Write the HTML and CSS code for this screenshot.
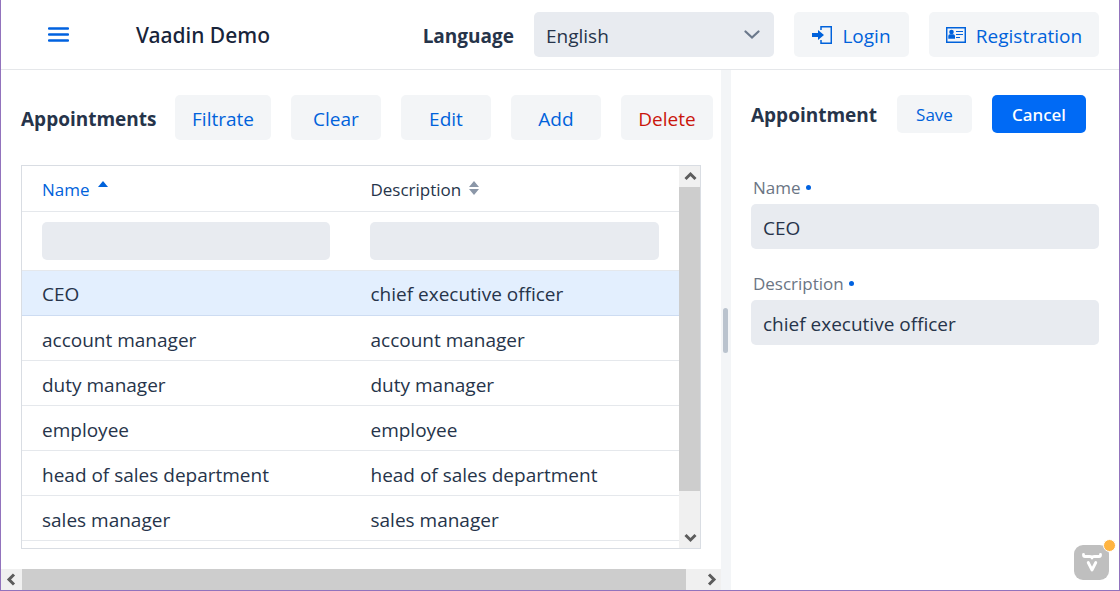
FILE: index.html
```html
<!DOCTYPE html>
<html lang="en">
<head>
<meta charset="utf-8">
<title>Vaadin Demo</title>
<link rel="stylesheet" href="styles.css">
</head>
<body>
<div class="app">
  <header class="navbar">
    <button class="menu-toggle" type="button" aria-label="Menu">
      <svg width="21" height="16" viewBox="0 0 21 16"><path d="M1 1.500h19M1 7.500h19M1 13.500h19" stroke="currentColor" stroke-width="2.400" stroke-linecap="round"/></svg>
    </button>
    <h1 class="app-title">Vaadin Demo</h1>
    <div class="nav-actions">
      <label class="heading" for="language">Language</label>
      <div class="select-wrap">
        <select class="field" id="language"><option>English</option></select>
        <svg class="select-arrow" width="16" height="10" viewBox="0 0 16 10"><path d="M1.500 1.500L8 7.500L14.500 1.500" fill="none" stroke="currentColor" stroke-width="2.200" stroke-linecap="round"/></svg>
      </div>
      <button class="btn btn-login" type="button">
        <svg width="20" height="20" viewBox="0 0 20 20"><path d="M9 4V.7H19.300V17.300H9V14" fill="none" stroke="currentColor" stroke-width="1.500"/><path d="M0 7h6V4l6 5-6 5v-3H0z" fill="currentColor"/></svg>
        Login
      </button>
      <button class="btn btn-registration" type="button">
        <svg width="20" height="20" viewBox="0 0 20 20"><path d="M.7 1.700H19.300V16.300H.7z" fill="none" stroke="currentColor" stroke-width="1.500"/><path d="M10 5.500h7M10 8.500h7M10 11.500h4" stroke="currentColor" stroke-width="1"/><circle cx="5.500" cy="6" r="2.300" fill="currentColor"/><path d="M2.300 12.700V10q0-1.700 1.700-1.700h3.200q1.800 0 1.800 1.700v2.700z" fill="currentColor"/></svg>
        Registration
      </button>
    </div>
  </header>
  <main class="split">
    <section class="master">
      <div class="master-body">
        <div class="toolbar">
          <h2 class="heading list-heading">Appointments</h2>
          <button class="btn btn-filtrate" type="button">Filtrate</button>
          <button class="btn" type="button">Clear</button>
          <button class="btn" type="button">Edit</button>
          <button class="btn" type="button">Add</button>
          <button class="btn btn-danger" type="button">Delete</button>
        </div>
        <div class="grid">
          <div class="grid-view">
            <table class="grid-table">
              <thead>
                <tr class="head-row">
                  <th scope="col"><span class="sorter sorter-active">Name
                    <svg width="10" height="18" viewBox="0 0 10 18"><path d="M5 0l5 6H0z" fill="currentColor"/></svg></span></th>
                  <th scope="col"><span class="sorter">Description
                    <svg class="sort-icon" width="10" height="18" viewBox="0 0 10 18"><path d="M5 0l5 6H0zM5 14l5-6H0z" fill="currentColor"/></svg></span></th>
                </tr>
                <tr class="filter-row">
                  <td><input class="field field-small" type="text" aria-label="Filter by name"></td>
                  <td><input class="field field-small" type="text" aria-label="Filter by description"></td>
                </tr>
              </thead>
              <tbody>
                <tr class="selected"><td>CEO</td><td>chief executive officer</td></tr>
                <tr><td>account manager</td><td>account manager</td></tr>
                <tr><td>duty manager</td><td>duty manager</td></tr>
                <tr><td>employee</td><td>employee</td></tr>
                <tr><td>head of sales department</td><td>head of sales department</td></tr>
                <tr><td>sales manager</td><td>sales manager</td></tr>
              </tbody>
            </table>
          </div>
          <div class="scrollbar scrollbar-vertical">
            <svg width="21" height="21" viewBox="0 0 21 21"><path d="M6.500 13l5-5 5 5" class="chevron"/></svg>
            <div class="thumb-vertical"></div>
            <div class="track"></div>
            <svg width="21" height="21" viewBox="0 0 21 21"><path d="M6.500 8l5 5 5-5" class="chevron"/></svg>
          </div>
        </div>
      </div>
      <div class="scrollbar">
        <svg width="21" height="21" viewBox="0 0 21 21"><path d="M13 5.500l-5 5 5 5" class="chevron"/></svg>
        <div class="thumb-horizontal"></div>
        <div class="track"></div>
        <svg width="21" height="21" viewBox="0 0 21 21"><path d="M9 5.500l5 5-5 5" class="chevron"/></svg>
      </div>
    </section>
    <div class="splitter"><div class="splitter-handle"></div></div>
    <section class="detail">
      <div class="toolbar">
        <h2 class="heading detail-heading">Appointment</h2>
        <button class="btn btn-small" type="button">Save</button>
        <button class="btn btn-small btn-primary" type="button">Cancel</button>
      </div>
      <form class="form">
        <div class="form-item">
          <label for="name">Name <span class="required"></span></label>
          <input class="field" id="name" type="text" value="CEO">
        </div>
        <div class="form-item">
          <label for="description">Description <span class="required"></span></label>
          <input class="field" id="description" type="text" value="chief executive officer">
        </div>
      </form>
    </section>
  </main>
  <button class="devtools" type="button" aria-label="Vaadin developer tools">
    <svg width="20" height="22" viewBox="0 0 20 22"><path d="M1.500 2.500v.5q0 1.500 1.500 1.500h4.500q2.500 0 2.500 1.500 0-1.500 2.500-1.500H17q1.500 0 1.500-1.500v-.5M6.200 10.500l3.800 7.500 3.800-7.500" fill="none" stroke="currentColor" stroke-width="2.800" stroke-linecap="round" stroke-linejoin="round"/></svg>
    <span class="devtools-badge"></span>
  </button>
</div>
</body>
</html>
```
FILE: styles.css
```css
* {
  box-sizing: border-box;
}

body {
  margin: 0;
  color: #26344a;
  background: #fff;
  font-family: "Open Sans", "Noto Sans", sans-serif;
  font-size: 19px;
}

button,
input,
select {
  font: inherit;
  color: inherit;
}

svg {
  flex: none;
}

.app {
  position: relative;
  display: flex;
  flex-direction: column;
  height: 100vh;
  border: 1px solid #9273bd;
  border-top: 0;
}

.navbar {
  display: flex;
  align-items: center;
  height: 70px;
  padding: 0 20px;
  border-bottom: 1px solid #e5e7ea;
}

.menu-toggle {
  display: flex;
  justify-content: center;
  width: 75px;
  padding: 0;
  border: 0;
  background: none;
  color: #0062e0;
}

.app-title {
  margin: 0 0 0 40px;
  color: #18243a;
  font-family: "Noto Sans", "Open Sans", sans-serif;
  font-size: 21px;
  font-weight: 500;
}

.nav-actions {
  display: flex;
  flex: 1;
  align-items: center;
  justify-content: flex-end;
  gap: 20px;
}

.heading {
  margin: 0;
  padding-top: 2px;
  font-size: 19px;
  font-weight: 700;
  white-space: nowrap;
}

.field {
  display: block;
  width: 100%;
  height: 45px;
  padding: 2px 12px 0;
  border: 0;
  border-radius: 5px;
  background: #e8ebf0;
}

.field-small {
  height: 38px;
}

.select-wrap {
  position: relative;
  width: 240px;
}

select.field {
  appearance: none;
}

.select-arrow {
  position: absolute;
  top: 18px;
  right: 14px;
  color: #6b788b;
  pointer-events: none;
}

.btn {
  display: flex;
  flex: none;
  align-items: center;
  justify-content: center;
  gap: 10px;
  min-width: 90px;
  height: 45px;
  padding: 2px 12px 0;
  border: 0;
  border-radius: 5px;
  background: #f3f5f7;
  color: #0062db;
}

.btn-login {
  width: 115px;
}

.btn-registration {
  width: 170px;
}

.btn-filtrate {
  width: 96px;
}

.btn-danger {
  width: 92px;
  color: #ca150c;
}

.btn-small {
  min-width: 75px;
  height: 38px;
  padding-top: 0;
  font-size: 17px;
}

.btn-primary {
  width: 94px;
  background: #006af5;
  color: #fff;
  font-family: "Noto Sans", "Open Sans", sans-serif;
  font-weight: 500;
}

.split {
  display: flex;
  flex: 1;
  min-height: 0;
}

.master {
  display: flex;
  flex: none;
  flex-direction: column;
  width: 64.4%;
}

.master-body {
  display: flex;
  flex: 1;
  flex-direction: column;
  gap: 25px;
  min-height: 0;
  padding: 25px 20px 20px;
}

.toolbar {
  display: flex;
  align-items: center;
  gap: 20px;
}

.list-heading {
  flex: none;
  width: 134px;
}

.grid {
  display: flex;
  flex: 1;
  min-height: 0;
  border: 1px solid #d9dde3;
}

.grid-view {
  flex: 1;
  overflow: hidden;
}

.grid-table {
  width: 100%;
  table-layout: fixed;
  border-spacing: 0;
}

.grid-table th,
.grid-table td {
  height: 45px;
  padding: 3px 20px 0;
  border-bottom: 1px solid #e5e8ec;
  text-align: left;
  white-space: nowrap;
}

.grid-table .head-row th {
  height: 46px;
  padding-top: 2px;
  font-size: 17px;
  font-weight: 400;
}

.grid-table .filter-row td {
  height: 59px;
  padding-top: 0;
}

.grid-table .selected td {
  padding-top: 2px;
  border-color: #cddcf2;
  background: #e3effe;
}

.sorter {
  display: flex;
  align-items: center;
  gap: 8px;
}

.sorter-active {
  color: #0062db;
}

.sort-icon {
  color: #8b97a8;
}

.scrollbar {
  display: flex;
  height: 21px;
  background: #f0f0f0;
}

.scrollbar-vertical {
  flex-direction: column;
  width: 21px;
  height: auto;
}

.chevron {
  fill: none;
  stroke: #5c5c5c;
  stroke-width: 3;
}

.thumb-vertical {
  flex: 304;
  background: #cdcdcd;
}

.scrollbar-vertical .track {
  flex: 36;
}

.thumb-horizontal {
  flex: 664;
  background: #cdcdcd;
}

.track {
  flex: 14;
}

.splitter {
  display: flex;
  flex: none;
  align-items: center;
  justify-content: center;
  width: 10px;
  background: #f3f5f7;
}

.splitter-handle {
  width: 5px;
  height: 45px;
  border-radius: 3px;
  background: #bac3ce;
}

.detail {
  flex: 1;
  min-width: 0;
  padding: 25px 20px;
}

.detail-heading {
  flex: none;
  width: 126px;
}

.form {
  display: flex;
  flex-direction: column;
  gap: 20px;
  padding-top: 40px;
}

.form-item label {
  display: flex;
  align-items: center;
  gap: 5px;
  height: 31px;
  padding: 0 2px 2px;
  color: #6b7584;
  font-size: 17px;
}

.required {
  width: 5px;
  height: 5px;
  border-radius: 50%;
  background: #0062e0;
}

.devtools {
  position: absolute;
  right: 10px;
  bottom: 10px;
  display: flex;
  align-items: center;
  justify-content: center;
  width: 35px;
  height: 35px;
  padding: 0;
  border: 0;
  border-radius: 9px;
  background: #bfbfbf;
  color: #fff;
}

.devtools-badge {
  position: absolute;
  top: -6px;
  right: -7px;
  width: 13px;
  height: 13px;
  border: 1px solid #fff;
  border-radius: 50%;
  background: #ffb441;
}
```
